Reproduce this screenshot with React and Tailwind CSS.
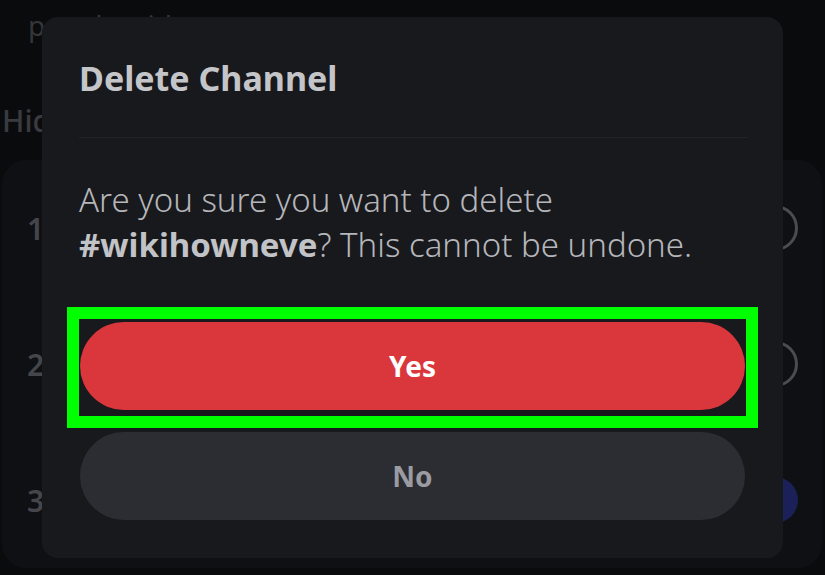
import React from 'react';

const font = { fontFamily: '"Noto Sans", "Open Sans", sans-serif' };

const Row = ({ n, filled }) => (
  <div className="flex h-[136px] items-center justify-between pl-[25px] pr-[24px]">
    <span className="text-[30px] font-semibold text-[#45464b]">{n}</span>
    {filled ? (
      <span className="h-[46px] w-[46px] rounded-full bg-[#1c2058]" />
    ) : (
      <span className="h-[46px] w-[46px] rounded-full border-[3px] border-[#4b4c51]" />
    )}
  </div>
);

const App = () => {
  return (
    <div className="relative h-[575px] w-[825px] overflow-hidden bg-[#0a0b0d]" style={font}>
      {/* page behind the dialog */}
      <div className="flex flex-col">
        <p className="mt-[5px] pl-[28px] text-[28px] leading-[40px] text-[#35363a]">people with access</p>
        <p className="mt-[56px] pl-[2px] text-[30px] font-medium leading-[40px] text-[#3a3b40]">Hidden</p>
        <div className="ml-[2px] mr-[3px] mt-[19px] rounded-[24px] bg-[#0f1013]">
          <Row n="1" />
          <Row n="2" />
          <Row n="3" filled />
        </div>
      </div>

      {/* dialog */}
      <div className="absolute left-[42px] top-[17px] flex h-[541px] w-[741px] flex-col rounded-[16px] bg-[#18191c] pl-[37px] pr-[35px] pt-[41px]">
        <h2 className="text-[34px] font-bold leading-[40px] text-[#c4c5c9]">Delete Channel</h2>
        <div className="mt-[39px] h-px bg-[#222327]" />
        <p className="mt-[39px] text-[33px] font-light leading-[45px] text-[#b5b6bb]">
          Are you sure you want to delete
          <br />
          <b className="font-bold text-[#c2c3c7]">#wikihowneve</b>? This cannot be undone.
        </p>
        <button className="mt-[55px] ml-px mr-[3px] flex h-[88px] items-center justify-center rounded-full bg-[#da373c] text-[28px] font-bold text-white">
          Yes
        </button>
        <button className="mt-[22px] ml-px mr-[3px] flex h-[88px] items-center justify-center rounded-full bg-[#2c2d33] text-[28px] font-bold text-[#9b9ca2]">
          No
        </button>
      </div>

      {/* highlight frame */}
      <div className="pointer-events-none absolute left-[67px] top-[307px] h-[121px] w-[691px] border-[12px] border-[#00ff00]" />
    </div>
  );
};

export default App;
